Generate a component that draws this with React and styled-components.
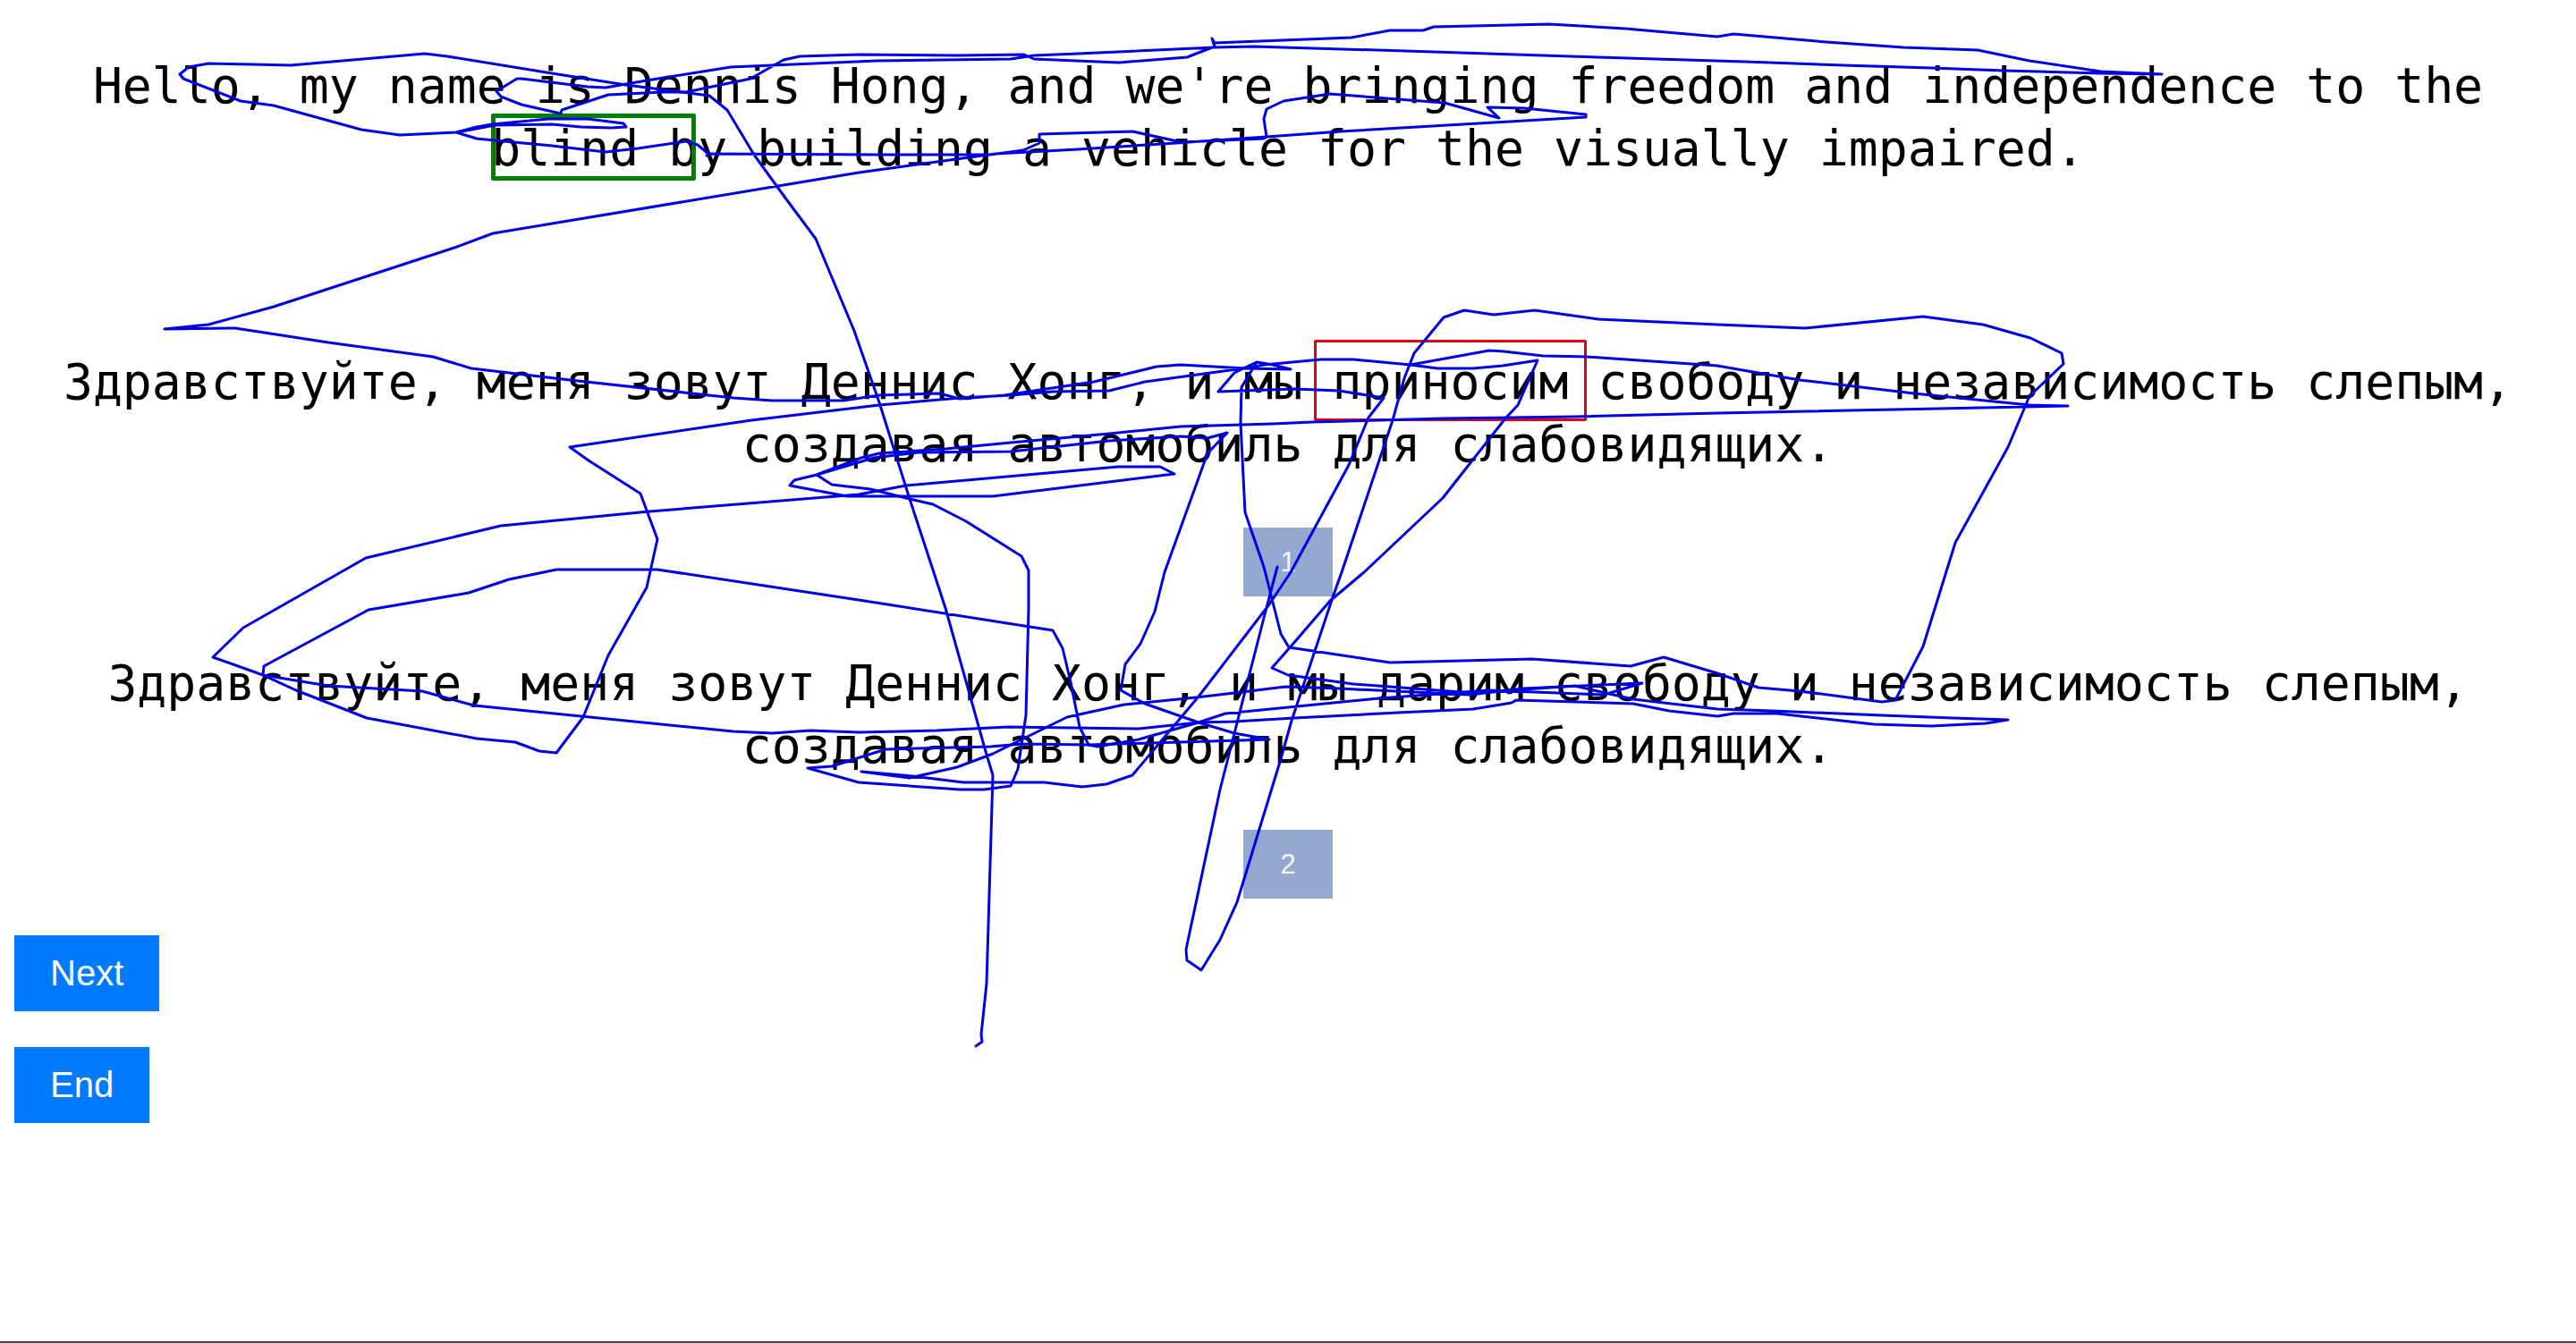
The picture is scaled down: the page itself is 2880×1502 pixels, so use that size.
import React from 'react';
import styled, {createGlobalStyle} from 'styled-components';

const GlobalStyle = createGlobalStyle`
	html, body {
		margin: 0;
		background: #ffffff;
	}
`

const Page = styled.div`
	position: relative;
	box-sizing: border-box;
	height: 100vh;
	padding-top: 61px;
	overflow: hidden;
	border-bottom: 2px solid #444444;
	background: #ffffff;
`

const Transcript = styled.p`
	margin: 0 0 ${props => props.$after}px;
	padding: 0 16px;
	font-family: "DejaVu Sans Mono", monospace;
	font-size: 54.8px;
	line-height: 70px;
	text-align: center;
	color: #000000;
`

const Rating = styled.div`
	display: flex;
	align-items: center;
	justify-content: center;
	width: 100px;
	height: 77px;
	margin: 0 auto ${props => props.$after}px;
	background: #94a8d0;
	font-family: "Liberation Sans", Arial, sans-serif;
	font-size: 31px;
	color: #f4f6fb;
`

const Actions = styled.div`
	display: flex;
	flex-direction: column;
	align-items: flex-start;
	gap: 40px;
	padding-left: 16px;
`

const ActionButton = styled.button`
	height: 85px;
	padding: 0 40px;
	border: none;
	background: #007bff;
	font-family: "Liberation Sans", Arial, sans-serif;
	font-size: 40px;
	color: #ffffff;
`

const Highlight = styled.div`
	position: absolute;
	box-sizing: border-box;
	left: ${props => props.$left}px;
	top: ${props => props.$top}px;
	width: ${props => props.$width}px;
	height: ${props => props.$height}px;
	border: ${props => props.$border}px solid ${props => props.$color};
	border-radius: 2px;
`

const Ink = styled.svg`
	position: absolute;
	left: 0;
	top: 0;
	width: 2880px;
	height: 1502px;
	pointer-events: none;
	polyline {
		fill: none;
		stroke: #0000e6;
		stroke-width: 3;
		stroke-linejoin: round;
		stroke-linecap: round;
	}
`

const strokes = [
	// closed loop along the top of the first paragraph
	'2417,83 2349,80 2269,68 2211,56 2128,53 2042,47 1938,38 1920,41 1817,32 1732,27 1603,30 1591,34 1554,34 1511,42 1358,48 1355,43 1358,52 1327,64 1251,70 1156,66 1145,61 1070,62 960,61 894,63 876,67 839,88 767,103 740,103 680,106 628,123 627,127 583,117 560,108 555,102 578,88 583,88 657,97 677,98 723,90 817,75 980,68 1130,66 1156,62 1205,60 1358,53 1401,52 1572,57 1756,63 1951,69 2061,73 2159,76 2241,79 2349,82 2417,83',
	// long drop to the bottom, back up to the left of the top lines, then through the middle
	'1091,1170 1098,1165 1097,1157 1103,1100 1110,867 1101,837 1057,680 1017,558 983,450 955,370 912,267 877,220 843,173 813,123 793,107 700,95 617,82 500,63 475,60 325,73 282,72 233,71 211,75 201,83 205,88 269,113 306,118 404,145 447,151 510,148 533,142 550,139 613,133 657,133 697,138 700,142 683,143 650,142 617,139 553,140 527,145 510,148 533,155 553,157 617,163 677,170 713,166 767,158 780,162 793,173 790,174 793,172 980,173 1107,173 1144,168 1162,160 1162,150 1266,147 1321,159 1413,155 1416,153 1413,133 1416,122 1435,113 1487,105 1615,115 1676,132 1663,120 1704,121 1773,128 1773,131 1499,147 1416,153 1315,160 1205,167 1113,172 960,193 870,208 551,261 508,277 306,343 233,363 184,368 263,367 367,383 484,399 527,412 637,425 820,445 863,448 943,448 983,442 1050,440 1073,446 1123,442 1223,427 1293,410 1320,408 1393,412 1443,413 1423,408 1405,405 1380,417 1362,438 1447,435 1497,437 1547,445 1530,467 1508,520 1443,640 1419,676 1340,779 1266,867 1237,877 1210,880 1167,875 1077,875 1020,868 963,863 1017,870 1070,858 1110,843 1193,802 1257,788 1337,780 1380,775 1437,768 1497,770 1643,777 1703,770 1836,764 1793,777 1664,772 1542,781 1370,798 1340,808 1273,827 1227,835 1217,833 1207,813 1197,763 1188,725 1177,705 960,671 735,637 622,637 569,648 524,663 412,682 295,745 294,755 331,772 410,803 533,826 576,830 603,840 622,842 652,802 680,733 723,657 735,603 716,552 658,515 637,500 840,470 983,453 1073,445 1130,442 1177,438 1240,437 1280,427 1390,412 1405,405 1388,433 1387,473 1392,573 1413,634 1432,709 1441,724 1554,741 1713,737 1823,745 1860,735 1920,753 1966,769 2012,773 2104,785 2119,783 2150,723 2186,607 2245,500 2269,443 2307,407 2305,395 2270,378 2217,363 2150,354 2018,367 1920,363 1787,357 1716,347 1670,352 1637,347 1614,355 1581,395 1570,423 1557,470 1500,640 1490,668 1444,806 1431,852 1383,1009 1364,1051 1343,1085 1327,1074 1326,1062 1364,883 1413,691 1428,634',
	// left loop and the long lines under the russian text
	'1346,808 1340,808 1273,815 1127,813 1047,817 960,819 906,817 863,820 820,818 530,789 472,773 367,767 294,755 238,735 272,702 409,624 560,588 726,572 960,553 1013,543 1250,522 1297,522 1313,530 1110,555 947,555 883,543 888,537 913,531 963,512 983,507 1057,502 1130,495 1240,485 1320,477 1423,474 1467,472 1613,468 1760,466 1920,462 2312,454 2269,453 2140,440 2012,425 1954,415 1920,409 1774,399 1725,398 1681,393 1665,392 1577,408 1513,402 1477,402 1413,408 1393,412',
	// right side of the red box, down to the third paragraph and back
	'1577,408 1607,412 1647,412 1680,409 1719,403 1697,453 1683,468 1613,557 1560,607 1525,640 1487,672 1444,722 1422,747 1440,755 1513,765 1580,770 1647,775 1690,772 1760,767 1826,782 1920,793 1981,795 2104,800 2183,803 2245,805 2220,809 2159,812 2095,810 1987,798 1938,798 1920,801 1866,795 1826,787 1695,783 1690,786 1647,793 1563,797 1447,803 1380,807 1340,808',
	// second branch through the middle
	'913,531 930,542 973,547 1017,558 1043,564 1080,583 1142,622 1150,638 1150,680 1147,800 1138,860 1130,879 1100,883 1073,883 960,875 903,859 930,857 990,838 1107,835 1143,832 1217,833 1419,827 1380,820 1340,808 1280,787 1253,772 1258,743 1275,720 1291,684 1302,640 1350,507 1372,484 1350,490 1320,488 1240,493 1130,505 1027,506 977,512 913,531',
];

export default function App() {
	return (
		<Page>
			<GlobalStyle />
			<Transcript $after={191}>
				Hello, my name is Dennis Hong, and we're bringing freedom and independence to the blind by building a vehicle for the visually impaired.
			</Transcript>
			<Transcript $after={58}>
				Здравствуйте, меня зовут Деннис Хонг, и мы приносим свободу и независимость слепым, создавая автомобиль для слабовидящих.
			</Transcript>
			<Rating $after={62}>1</Rating>
			<Transcript $after={59}>
				Здравствуйте, меня зовут Деннис Хонг, и мы дарим свободу и независимость слепым, создавая автомобиль для слабовидящих.
			</Transcript>
			<Rating $after={41}>2</Rating>
			<Actions>
				<ActionButton>Next</ActionButton>
				<ActionButton>End</ActionButton>
			</Actions>
			<Highlight $left={549} $top={127} $width={229} $height={75} $border={5} $color="#008000" />
			<Highlight $left={1469} $top={380} $width={305} $height={91} $border={3} $color="#e0000f" />
			<Ink viewBox="0 0 2880 1502">
				{strokes.map((points, i) => <polyline key={i} points={points} />)}
			</Ink>
		</Page>
	);
}
